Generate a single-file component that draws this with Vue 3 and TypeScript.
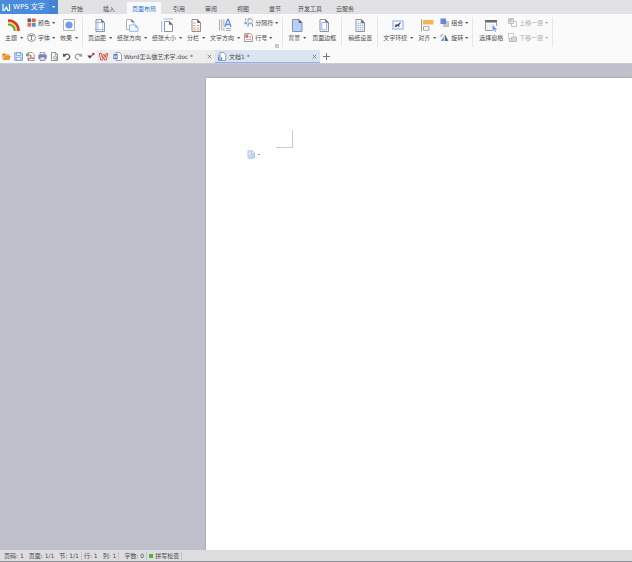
<script setup lang="ts">
import { ref } from 'vue'

interface Tool {
  label: string
  icon: string
  menu?: boolean
  disabled?: boolean
}
interface Cell {
  big?: Tool
  stack?: Tool[]
}
interface Group {
  cells: Cell[]
  launcher?: boolean
}

const sheet = '<path d="M3 1.5h5.5l3 3.2v8.8H3z" fill="#fff" stroke="#8f9399"/><path d="M8.2 1v4h3.8z" fill="#6b6e73"/>'

const icons: Record<string, string> = {
  theme:
    '<path d="M1 2.500C7.500 2.500 11.500 7 11.500 13" fill="none" stroke="#d9322e" stroke-width="2.600"/><path d="M1 4.700c5 0 8.300 3.200 8.400 8.300" fill="none" stroke="#f3d44c" stroke-width="1.800"/><path d="M1 6.500c4 0 6.500 2.500 6.700 6.500" fill="none" stroke="#5aa545" stroke-width="1.800"/>',
  color:
    '<path d="M.5.5h3.700v3.700H.5z" fill="#5b6068"/><path d="M5 .5h3.700v3.700H5z" fill="#e8613c"/><path d="M.5 5h3.700v3.700H.5z" fill="#ed6c47"/><path d="M5 5h3.700v3.700H5z" fill="#4f8fe6"/>',
  font:
    '<circle cx="4.500" cy="4.500" r="3.900" fill="#fff" stroke="#666" stroke-width=".7"/><path d="M2.700 3.500v-.9h3.600v.9M4.500 2.600v4M3.600 6.600h1.800" fill="none" stroke="#555" stroke-width=".7"/>',
  effect: '<path d="M1.500 1.500h11v11h-11z" fill="#fff" stroke="#b3b5b8"/><circle cx="7" cy="7" r="3.600" fill="#6f9bea"/>',
  margin: sheet + '<path d="M5 1v13M9.700 4.500v9M2 4.500h10M2 11.500h10" fill="none" stroke="#8fb2ee" stroke-width=".8"/>',
  orient:
    '<path d="M1.500 1.500h5l2.500 2.600v7.400H1.500z" fill="#fff" stroke="#b0b2b6"/><path d="M6.300 1v3.300h3z" fill="#666"/><path d="M4.500 7h6l2.500 2.300v4H4.500z" fill="#f5f9ff" stroke="#91b5f2"/><path d="M10.300 6.700v2.700H13z" fill="#6c9bea"/>',
  size:
    '<path d="M4.500 3.500h5l3 3v7h-8z" fill="#fff" stroke="#8f9399"/><path d="M9 3v3.800h3.800z" fill="#666"/><path d="M4 1h8.500M1.700 3.500V14" stroke="#9abaf0" fill="none"/><path d="M3.800 0v2M12.500 0v2M.8 3.500h2M.8 13.500h2" stroke="#c1d4f7" fill="none" stroke-width=".7"/>',
  columns:
    sheet + '<path d="M4.300 5h2.400M4.300 7.500h2.400M4.300 10h2.400M8 7.500h2.400M8 10h2.400M8 12h2.400M4.300 12h2.400" stroke="#ef8c6a" stroke-width="1"/>',
  direction:
    '<path d="M1.500 1.500v11M3.700 1.500v11M5.900 1.500v7M5.900 10v3M8 10.500h5M8 12.500h5" stroke="#a3a5a9" stroke-width=".9" fill="none"/><path d="M6.800 9 9.600 1.500h.8L13 9M7.800 6.500h4.300" fill="none" stroke="#5c91ea" stroke-width="1.300"/>',
  breaks:
    '<path d="M1.500.5v2M4 3.500V.8h3l1.500 1.400v1.300M4 9V5.800h4.500V9" fill="none" stroke="#85888d" stroke-width=".9"/><path d="M0 4.600h1.500V3l2 2-2 2V5.500H0z" fill="#5c91ea"/><path d="M4.500 4.700h4" stroke="#7faaf0" stroke-width=".7"/>',
  lineno:
    '<path d="M.6.6h5.600l2.200 2v5.900H.6z" fill="#fff" stroke="#898c91" stroke-width=".9"/><path d="M1.500 1.500h2.800v3.200H1.500z" fill="#e1605c"/><path d="M5 3.500h2M5 5h2M2 6.500h5" stroke="#d98580" stroke-width=".7"/>',
  background: '<path d="M2.500 1.500H9l3 3.200v8.800H2.500z" fill="#b8cffa" stroke="#8794aa"/><path d="M8.700 1v4h3.800z" fill="#5f6369"/>',
  border: sheet + '<path d="M4.800 4.500h4.900v7.300H4.800z" fill="none" stroke="#8db1f0"/>',
  grid: sheet + '<path d="M4 5.500h7M4 7.500h7M4 9.500h7M4 11.500h7M5.500 3v10M7.500 3v10M9.500 5v8" stroke="#a5c0f0" stroke-width=".6"/>',
  wrap:
    '<path d="M1 2h12v10H1z" fill="#bcd1f8"/><path d="M3 4h8v6H3z" fill="#f7f9fd"/><path d="m3.800 9 .8-2.800 1.500.4 1.400-.8 1.800-1.700.4.900-1.500 2.200L8.500 9h-.8L7 7.800 5.200 9z" fill="#4b4e53"/>',
  align: '<path d="M1.500 1v12.500" stroke="#9b9da0"/><path d="M3 2h10.500v4.500H3z" fill="#f5b652"/><path d="M3.500 8.700h5.500v3.500H3.500z" fill="#fff" stroke="#a2a4a7"/>',
  group: '<path d="M3.500 3.500h5v5h-5z" fill="#c5cad2" stroke="#a6abb4" stroke-width=".7"/><path d="M.5.500H6v5.500H.5z" fill="#6387d4"/>',
  rotate:
    '<path d="M4.700 1v7h3.800z" fill="#666a70"/><path d="M3.700 3.500v4.500H.9z" fill="#5c91ea"/><path d="M.7 4A3 3 0 0 1 3 1.300" fill="none" stroke="#5c91ea" stroke-width="1"/>',
  pane:
    '<path d="M1 2h12v2.500H1z" fill="#666a6e"/><path d="M1.500 4.500v8h7M12.500 4.500V8" fill="none" stroke="#999da2"/><path d="M3 7h8M3 9h5M3 11h4" stroke="#c9ccd0" stroke-width=".7" stroke-dasharray="1 1"/><path d="m8.500 7 .2 6 1.500-1.300L11 14l1-.5-.9-2 2-.3z" fill="#6b98ed"/>',
  up: '<path d="M3.500 3.500h5v5h-5z" fill="#fff" stroke="#b5b5b5" stroke-width=".8"/><path d="M.5.500h5v5h-5z" fill="#e2e2e2" stroke="#b5b5b5" stroke-width=".8"/><path d="M2 4V2h2.500" fill="none" stroke="#aaa"/>',
  down: '<path d="M.5.500h5v5h-5z" fill="#fff" stroke="#bbb" stroke-width=".8"/><path d="M3.500 4h5v4.500h-5z" fill="#d5d5d5" stroke="#b5b5b5" stroke-width=".8"/><path d="M1.500 6v2.500h1.500" fill="none" stroke="#aaa"/>',
  open: '<path d="M.3 1.500h3l1 1h3.200v1.200H2L.3 7z" fill="#e88a2a"/><path d="M2.300 4h6.500L7.300 8H.6z" fill="#f0912f"/>',
  save: '<path d="M.8.8h6.500l1 1v6.500H.8z" fill="#dfeafb" stroke="#6f9ae8" stroke-width="1"/><path d="M2.500 1h4v2.500h-4zM2.300 5.300h4.500v3H2.300z" fill="#fff" stroke="#6f9ae8" stroke-width=".8"/>',
  pdf: '<path d="M2 .5h4.200l2 2v6H2z" fill="#fff" stroke="#8a8a8a" stroke-width=".8"/><path d="M0 1.500h3.500V4H0z" fill="#7ca17c"/><path d="M2 7.500c2.500-1 2.800-3 2.500-4.500.3 2.500 1.500 3.300 3.200 3.200C5.500 6 4 6.300 2 7.500z" fill="#fff" stroke="#d8403c" stroke-width=".8"/>',
  print: '<path d="M2 .7h5v2H2z" fill="#fff" stroke="#7677a9" stroke-width=".8"/><path d="M.3 2.800h8.400v3.900H.3z" fill="#7f80b8"/><path d="M2 5h5v3.400H2z" fill="#e4e5f3" stroke="#7677a9" stroke-width=".8"/>',
  preview: '<path d="M1.500.5h4l2 2v6h-6z" fill="#fff" stroke="#777" stroke-width=".8"/><path d="M5.300.500v2.200h2.200" fill="none" stroke="#777" stroke-width=".7"/><circle cx="5" cy="5.500" r="1.600" fill="#e8f4e8" stroke="#69a36b" stroke-width=".8"/><path d="m6 6.500 2.300 2.200" stroke="#69a36b"/>',
  undo: '<path d="M2 3.300C5 1 7.800 2.300 7.700 4.800 7.600 6.700 6 7.500 4.500 7.900" fill="none" stroke="#555" stroke-width="1.300"/><path d="M.8 1.300 1.200 5l3.300-1z" fill="#555"/>',
  redo: '<path d="M7 3.300C4 1 1.200 2.300 1.300 4.800 1.400 6.700 3 7.500 4.500 7.900" fill="none" stroke="#999" stroke-width="1.100"/><path d="M8.200 1.300 7.800 5 4.500 4z" fill="#999"/>',
  check: '<path d="M1.300 3.600h5L3.900 6.800z" fill="#444"/><path d="m4.500 5 2.500-2.500" stroke="#555" stroke-width=".8"/><circle cx="7.300" cy="2" r="1.300" fill="#e22e28"/>',
  wps: '<path d="M.3 1.500h2.200l.8 4 1-3h1l.9 3 1-4h1.600L7.300 8H5.600L4.600 5 3.500 8H1.700z" fill="none" stroke="#dc403c" stroke-width=".9"/>',
  docfile: '<path d="M3 .5h3.500l2 2v6H3z" fill="#fff" stroke="#7d8ca8" stroke-width=".8"/><path d="M.3 2h4.500v5H.3z" fill="#5d83c6"/><path d="m1 3.300.8 2.500.8-2 .8 2L4 3.300" fill="none" stroke="#fff" stroke-width=".6"/>',
  newfile: '<path d="M2 .5h3.700l2 2v6H2z" fill="#fff" stroke="#808894" stroke-width=".8"/><path d="M.5 4.500V8h3.200M3.700 5v2.500" fill="none" stroke="#4b87df" stroke-width="1.100"/><path d="M.3 2.500v1.300h2" fill="none" stroke="#72a1e8" stroke-width=".8"/>',
  paste: '<path d="M1 .8h4.500l2 2.200v5.200H1z" fill="#dfe9f9" stroke="#a8c0e8" stroke-width=".9"/><path d="M4.500 1v3h3M3 5h3v2H3z" fill="#eff5ff" stroke="#9cb8e8" stroke-width=".8"/>',
}

const menus = ['开始', '插入', '页面布局', '引用', '审阅', '视图', '章节', '开发工具', '云服务']
const current = ref('页面布局')

const t = (label: string, icon: string, menu = true, disabled = false): Tool => ({ label, icon, menu, disabled })

const groups: Group[] = [
  { cells: [{ big: t('主题', 'theme') }, { stack: [t('颜色', 'color'), t('字体', 'font')] }, { big: t('效果', 'effect') }] },
  {
    launcher: true,
    cells: [
      { big: t('页边距', 'margin') },
      { big: t('纸张方向', 'orient') },
      { big: t('纸张大小', 'size') },
      { big: t('分栏', 'columns') },
      { big: t('文字方向', 'direction') },
      { stack: [t('分隔符', 'breaks'), t('行号', 'lineno')] },
    ],
  },
  { cells: [{ big: t('背景', 'background') }, { big: t('页面边框', 'border', false) }] },
  { cells: [{ big: t('稿纸设置', 'grid', false) }] },
  { cells: [{ big: t('文字环绕', 'wrap') }, { big: t('对齐', 'align') }, { stack: [t('组合', 'group'), t('旋转', 'rotate')] }] },
  { cells: [{ big: t('选择窗格', 'pane', false) }, { stack: [t('上移一层', 'up', true, true), t('下移一层', 'down', true, true)] }] },
]

const quick = [
  ['open', '打开'],
  ['save', '保存'],
  ['pdf', '输出为PDF'],
  ['print', '打印'],
  ['preview', '打印预览'],
  ['undo', '撤消'],
  ['redo', '恢复'],
]

const docs = [
  { name: 'Word怎么做艺术字.doc *', icon: 'docfile', active: false },
  { name: '文档1 *', icon: 'newfile', active: true },
]
</script>

<template>
  <div class="app">
    <header class="menubar">
      <button class="brand">
        <svg class="logo" viewBox="0 0 9 9" aria-hidden="true">
          <path d="M1 1v6.500h1.200L4.500 4l1.200 3.500H7.500V1" fill="none" stroke="#fff" stroke-width="1.200" />
        </svg>
        <span>WPS 文字</span>
      </button>
      <button class="brand-menu" aria-label="菜单"><i class="caret"></i></button>
      <nav class="menus">
        <button v-for="m in menus" :key="m" class="menu" :class="{ active: m === current }" @click="current = m">{{ m }}</button>
      </nav>
    </header>

    <div class="ribbon">
      <div v-for="(g, gi) in groups" :key="gi" class="group">
        <template v-for="(c, ci) in g.cells" :key="ci">
          <button v-if="c.big" class="big" :class="{ plain: !c.big.menu }">
            <svg class="icon-big" viewBox="0 0 14 14" aria-hidden="true" v-html="icons[c.big.icon]"></svg>
            <span class="label">{{ c.big.label }}<i v-if="c.big.menu" class="caret"></i></span>
          </button>
          <div v-else class="stack">
            <button v-for="s in c.stack" :key="s.label" class="small" :disabled="s.disabled">
              <svg class="icon" viewBox="0 0 9 9" aria-hidden="true" v-html="icons[s.icon]"></svg>
              <span class="label">{{ s.label }}<i v-if="s.menu" class="caret"></i></span>
            </button>
          </div>
        </template>
        <button v-if="g.launcher" class="launcher" aria-label="页面设置">
          <svg viewBox="0 0 4 4"><path d="M.5 3.500v-3h3M1.500 1.500h2v2h-2z" fill="none" stroke="#999" stroke-width=".6" /></svg>
        </button>
      </div>
    </div>

    <div class="docbar">
      <div class="quick">
        <button v-for="q in quick" :key="q[0]" :aria-label="q[1]">
          <svg class="icon" viewBox="0 0 9 9" v-html="icons[q[0]]"></svg>
        </button>
        <button aria-label="自定义">
          <svg class="icon" viewBox="0 0 9 9" v-html="icons.check"></svg>
        </button>
      </div>
      <button class="home" aria-label="WPS"><svg class="icon" viewBox="0 0 9 9" v-html="icons.wps"></svg></button>
      <div v-for="d in docs" :key="d.name" class="doc" :class="{ active: d.active }">
        <svg class="icon" viewBox="0 0 9 9" aria-hidden="true" v-html="icons[d.icon]"></svg>
        <span class="doc-name">{{ d.name }}</span>
        <button class="close" aria-label="关闭">
          <svg viewBox="0 0 5 5"><path d="m.7.7 3.600 3.600M4.300.7.7 4.300" stroke="#777" stroke-width=".8" /></svg>
        </button>
      </div>
      <button class="add" aria-label="新建">
        <svg viewBox="0 0 7 7"><path d="M3.500 0v7M0 3.500h7" stroke="#777" /></svg>
      </button>
    </div>

    <main class="workspace">
      <section class="page">
        <div class="corner"></div>
        <button class="tag" aria-label="粘贴选项">
          <svg class="icon" viewBox="0 0 9 9" v-html="icons.paste"></svg><i class="dot"></i>
        </button>
      </section>
    </main>

    <footer class="status">
      <span class="wide">页码: 1</span>
      <span class="wide">页面: 1/1</span>
      <span class="ruled">节: 1/1</span>
      <span class="wide">行: 1</span>
      <span class="ruled wide">列: 1</span>
      <span class="ruled">字数: 0</span>
      <button class="spell ruled"><i class="lamp"></i>拼写检查</button>
    </footer>
  </div>
</template>

<style>
body {
  background: #bec1cb;
}
</style>

<style scoped>
.app {
  display: flex;
  flex-direction: column;
  min-height: 100vh;
  font-family: 'DejaVu Sans', 'Noto Sans CJK SC', sans-serif;
  font-size: 6px;
  line-height: 8px;
  color: #4c4c4c;
  white-space: nowrap;
}
button {
  display: flex;
  align-items: center;
  padding: 0;
  border: 0;
  background: none;
  font: inherit;
  color: inherit;
}
svg {
  display: block;
  flex: none;
}
.icon {
  width: 9px;
  height: 9px;
}
.caret {
  display: inline-block;
  margin-left: 3px;
  border: solid transparent;
  border-width: 2px 1px 0 2px;
  border-top-color: currentColor;
  vertical-align: 1px;
}
.menubar {
  display: flex;
  height: 14px;
  background: #e2e2e4;
}
.brand {
  gap: 2px;
  width: 49px;
  padding-left: 2px;
  background: #4a8cdc;
  color: #fff;
  font-size: 7px;
}
.logo {
  width: 9px;
  height: 9px;
}
.brand-menu {
  justify-content: center;
  width: 9px;
  background: #4483d2;
  color: #fff;
}
.brand-menu .caret {
  margin: 0;
}
.menus {
  display: flex;
  padding-left: 3px;
}
.menu {
  justify-content: center;
  min-width: 32px;
  padding: 3px 7px 0;
}
.menu.active {
  margin: 2px 2px 0;
  padding: 1px 5px 0;
  background: #f7f9fc;
  color: #2f70c4;
}
.ribbon {
  display: flex;
  height: 33px;
  padding-top: 3px;
  background: #fafafa;
}
.group {
  position: relative;
  display: flex;
  align-items: flex-start;
  gap: 5px;
  height: 29px;
  padding: 1px 4px 0 5px;
  border-right: 1px solid #e6e6e7;
}
.big {
  flex-direction: column;
  gap: 2px;
}
.plain {
  padding: 0 1px;
}
.icon-big {
  width: 14px;
  height: 14px;
}
.label {
  display: block;
}
.stack {
  display: flex;
  flex-direction: column;
  justify-content: space-between;
  height: 24px;
  margin-left: -1px;
}
.small {
  gap: 2px;
}
.small .caret {
  margin-left: 2px;
}
.small:disabled {
  color: #aaa;
}
.launcher {
  position: absolute;
  right: 3px;
  bottom: -1px;
}
.launcher svg {
  width: 4px;
  height: 4px;
}
.docbar {
  display: flex;
  height: 13px;
  background: #fafafa;
  border-bottom: 1px solid #c9ccd3;
}
.quick {
  display: flex;
  gap: 3px;
  width: 95px;
  padding-left: 2px;
}
.home {
  padding: 0 2px;
  background: #ededee;
}
.doc {
  display: flex;
  align-items: center;
  gap: 2px;
  box-sizing: border-box;
  width: 105px;
  padding: 0 3px;
  background: #ededee;
}
.doc.active {
  background: #dbe5f2;
  box-shadow: inset 0 -1px #8fb2e0;
}
.doc-name {
  flex: 1;
}
.close svg {
  width: 5px;
  height: 5px;
}
.add {
  padding: 0 3px;
}
.add svg {
  width: 7px;
  height: 7px;
}
.workspace {
  display: flex;
  flex: 1;
  padding: 14px 0 0 206px;
  background: #bec1cb;
}
.page {
  flex: 1;
  padding: 52px 0 0 41px;
  background: #fff;
  box-shadow: 0 0 2px #8d8fa0;
}
.corner {
  width: 16px;
  height: 17px;
  margin-left: 29px;
  border: solid #ccc;
  border-width: 0 1px 1px 0;
}
.tag {
  gap: 2px;
  margin-top: 2px;
}
.dot {
  width: 2px;
  height: 1px;
  background: #999;
}
.status {
  position: relative;
  display: flex;
  align-items: center;
  height: 10px;
  padding: 1px 4px 0;
  background: #dddddf;
  border-bottom: 1px solid #8e9099;
}
.wide {
  margin-right: 5px;
}
.ruled {
  padding-right: 2px;
  margin-right: 2px;
  border-right: 1px solid #c4c4c4;
}
.ruled.wide {
  margin-right: 5px;
}
.spell {
  gap: 2px;
}
.lamp {
  width: 4px;
  height: 4px;
  background: #4fb335;
}
</style>
